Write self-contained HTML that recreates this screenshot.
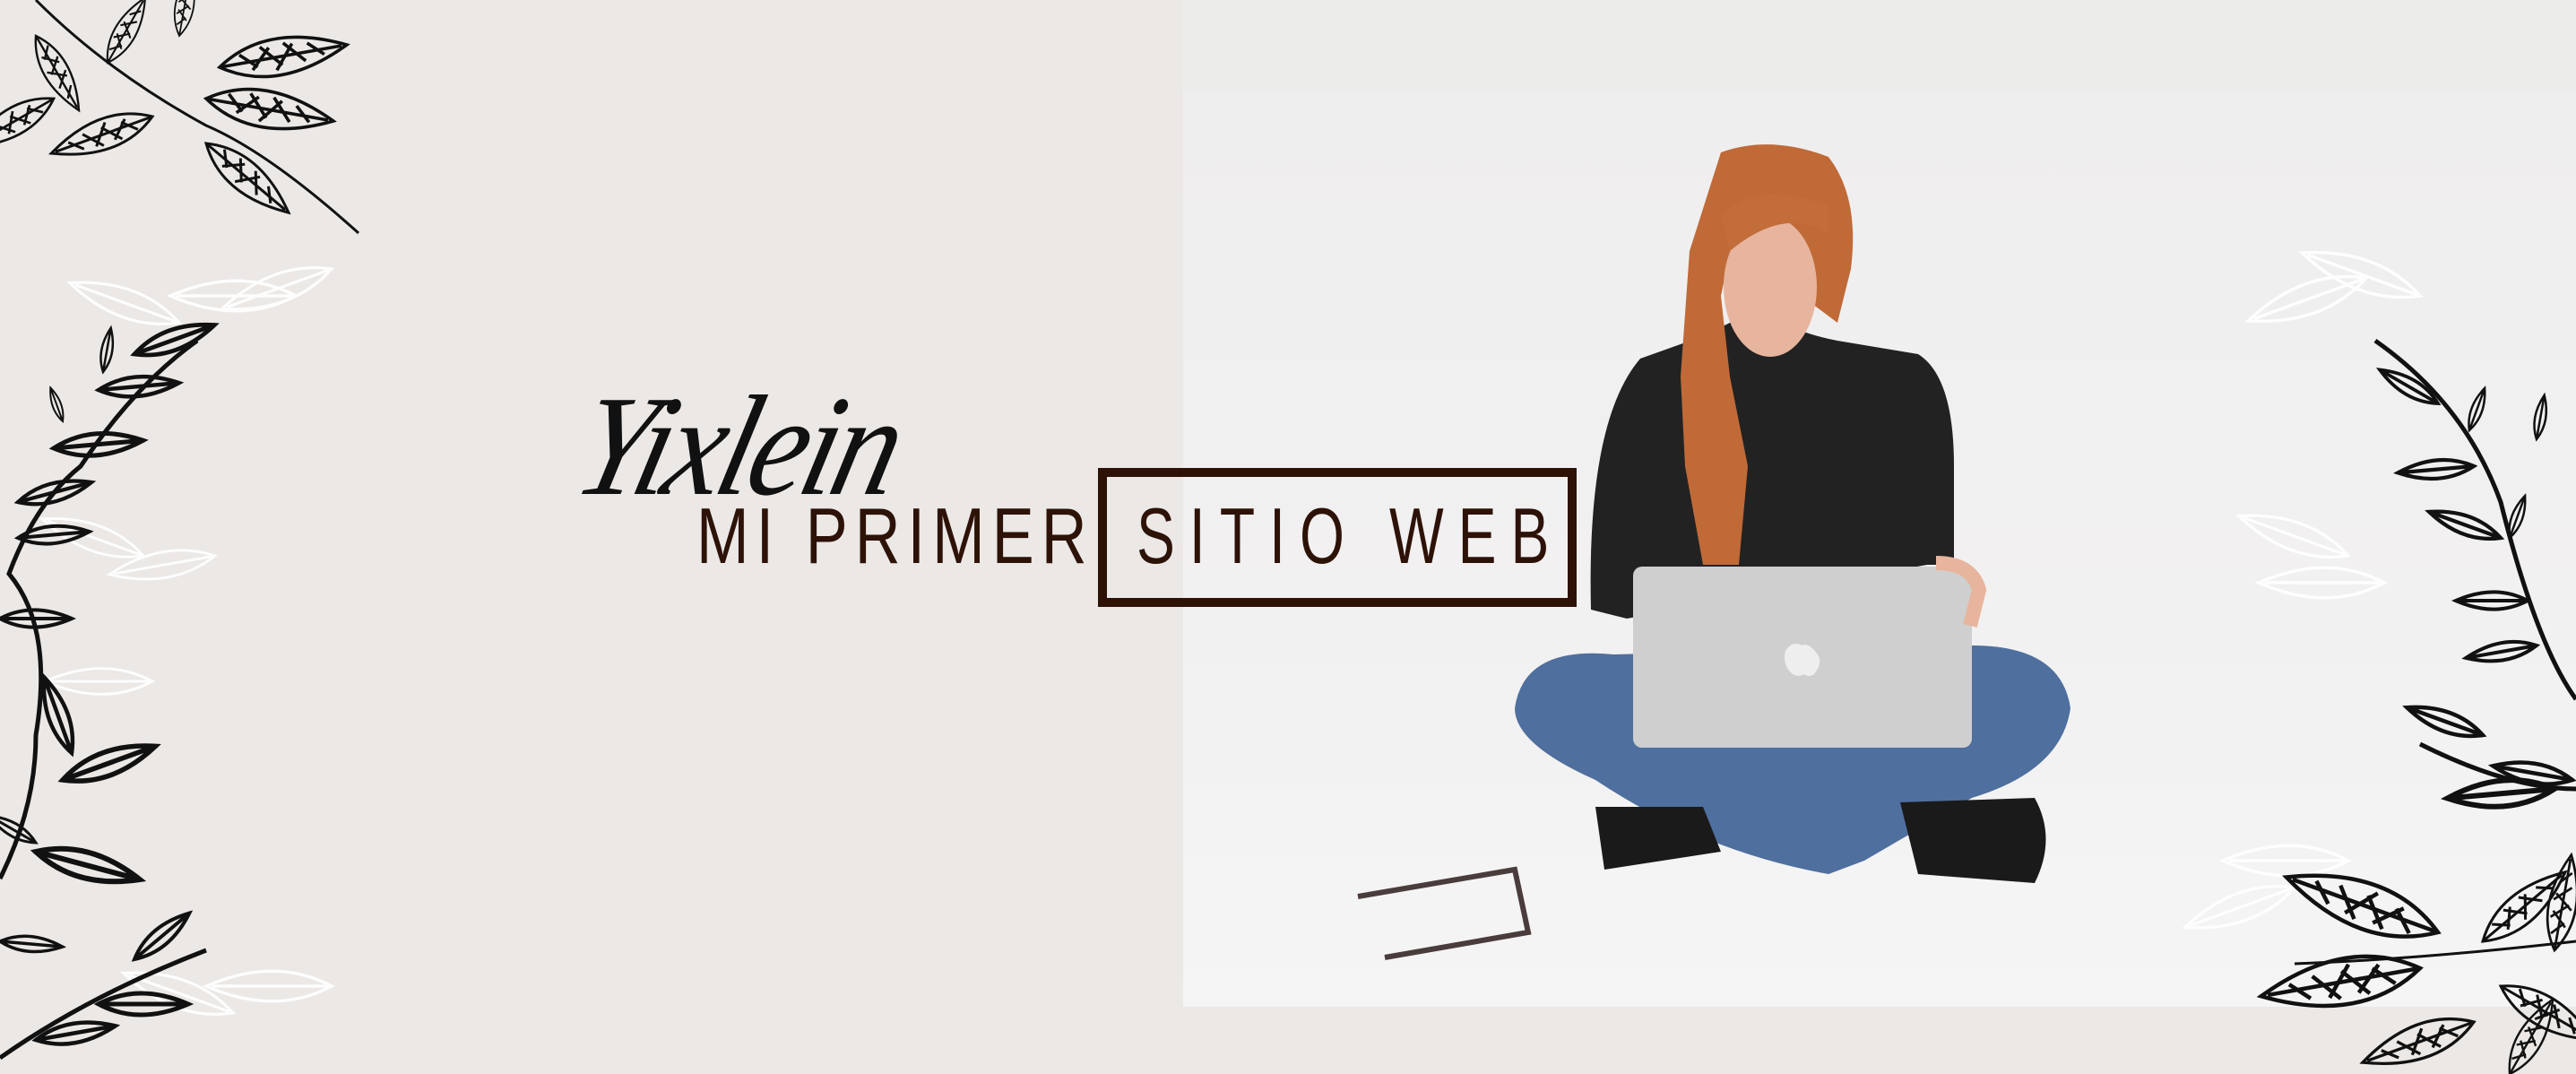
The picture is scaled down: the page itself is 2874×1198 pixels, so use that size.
<!DOCTYPE html>
<html><head><meta charset="utf-8"><style>
html,body{margin:0;padding:0;}
body{width:2874px;height:1198px;overflow:hidden;background:#ebe8e6;position:relative;font-family:"Liberation Sans",sans-serif;}
.photo{position:absolute;left:1320px;top:100px;width:1554px;height:1023px;background:linear-gradient(180deg,#efeeee 0%,#f2f1f1 60%,#f5f5f5 100%);}
.topbg{position:absolute;left:1320px;top:0;width:1554px;height:100px;background:#ececeb;}
svg{position:absolute;left:0;top:0;}
.script{position:absolute;left:672px;top:405px;font-family:"Liberation Serif",serif;font-style:italic;font-size:160px;color:#111;letter-spacing:-6px;transform:skewX(-14deg) scaleX(0.9);transform-origin:0 0;}
.t{position:absolute;top:548px;font-size:88px;color:#2d1207;letter-spacing:10px;transform-origin:0 0;white-space:nowrap;line-height:100px;}
.box{position:absolute;left:1225px;top:522px;width:514px;height:135px;border:10px solid #2e1206;}
</style></head><body>
<div class="topbg"></div>
<div class="photo"></div>
<svg width="2874" height="1198" viewBox="0 0 2874 1198">
<defs>
<path id="lf" d="M0 0 Q45 -24 100 0 Q45 24 0 0Z M0 0 L95 0"/>
<path id="fl" d="M0 0 Q50 -34 120 0 Q50 34 0 0Z M0 0 L115 0 M20 -8 L35 6 M40 -12 L58 8 M62 -12 L80 8 M84 -8 L98 5 M30 8 L48 -10 M52 12 L70 -10"/>
</defs>
<g>
<path d="M1775 680 Q1770 470 1830 400 L1900 375 L1930 360 L1990 360 Q2010 372 2050 380 L2140 395 Q2180 420 2180 520 L2180 630 L2150 630 L1815 690 Z" fill="#222"/>
<path d="M1920 170 Q1975 150 2040 175 Q2075 220 2065 300 L2050 360 L2010 330 L1990 250 L1935 260 L1920 330 L1930 420 L1950 520 L1940 630 L1900 630 L1880 520 L1875 420 L1885 280 Z" fill="#c06a38"/>
<ellipse cx="1975" cy="320" rx="52" ry="78" fill="#e7b59e"/>
<path d="M1920 240 Q1960 200 2040 230 L2040 260 Q1990 230 1930 280 Z" fill="#c26d3a"/>
<path d="M1690 790 Q1700 720 1800 730 L2200 720 Q2300 720 2310 790 Q2300 860 2200 890 L2080 960 L2040 975 Q1900 950 1780 870 Q1690 830 1690 790Z" fill="#4f6f9e"/>
<path d="M1780 900 L1900 900 L1920 950 L1790 970 Z" fill="#1a1a1a"/>
<path d="M2120 895 L2270 890 Q2295 935 2270 985 L2140 975 Z" fill="#1a1a1a"/>
<rect x="1822" y="632" width="378" height="202" rx="10" fill="#cfcfcf"/>
<path d="M2010 720 q-10 -6 -18 6 q-4 16 8 26 q8 4 12 0 q6 4 12 0 q10 -12 4 -22 q-10 -14 -18 -10z" fill="#eee"/>
<path d="M2160 628 q40 0 48 30 l-10 40" stroke="#e7b59e" stroke-width="16" fill="none"/>
<path d="M1515 1000 L1690 970 L1705 1040 L1545 1068" stroke="#4a3c3c" stroke-width="6" fill="none"/>
</g>
<g stroke="#fff" stroke-width="2.5" fill="none" opacity=".9">
<use href="#lf" transform="translate(330,330) rotate(180) scale(1.4)"/>
<use href="#lf" transform="translate(200,360) rotate(200) scale(1.3)"/>
<use href="#lf" transform="translate(370,300) rotate(160) scale(1.3)"/>
<use href="#lf" transform="translate(160,620) rotate(200) scale(1.2)"/>
<use href="#lf" transform="translate(240,620) rotate(170) scale(1.2)"/>
<use href="#lf" transform="translate(170,760) rotate(180) scale(1.2)"/>
<use href="#lf" transform="translate(370,1100) rotate(180) scale(1.4)"/>
<use href="#lf" transform="translate(260,1130) rotate(200) scale(1.3)"/>
<use href="#lf" transform="translate(2700,330) rotate(200) scale(1.4)"/>
<use href="#lf" transform="translate(2640,310) rotate(160) scale(1.4)"/>
<use href="#lf" transform="translate(2660,650) rotate(180) scale(1.4)"/>
<use href="#lf" transform="translate(2620,620) rotate(200) scale(1.3)"/>
<use href="#lf" transform="translate(2620,960) rotate(180) scale(1.4)"/>
<use href="#lf" transform="translate(2560,990) rotate(160) scale(1.3)"/>
</g>
<g stroke="#111" stroke-width="3" fill="none">
<path d="M40 0 Q120 80 230 140 Q300 170 400 260"/>
<use href="#fl" transform="translate(245,75) rotate(-10) scale(1.2)"/>
<use href="#fl" transform="translate(230,110) rotate(10) scale(1.2)"/>
<use href="#fl" transform="translate(60,110) rotate(150) scale(0.9)"/>
<use href="#fl" transform="translate(170,130) rotate(160) scale(1.0)"/>
<use href="#fl" transform="translate(230,160) rotate(40) scale(1.0)"/>
<use href="#fl" transform="translate(120,70) rotate(-60) scale(0.7)"/>
<use href="#fl" transform="translate(200,40) rotate(-80) scale(0.6)"/>
<use href="#fl" transform="translate(40,40) rotate(60) scale(0.8)"/>
</g>
<g stroke="#111" stroke-width="5" fill="none">
<path d="M0 980 Q40 900 40 820 Q60 700 10 640 Q40 560 90 520 Q150 430 220 380"/>
<path d="M0 1180 Q100 1110 230 1060"/>
<use href="#lf" transform="translate(150,395) rotate(-20) scale(0.95)"/>
<use href="#lf" transform="translate(110,435) rotate(-5) scale(0.9)"/>
<use href="#lf" transform="translate(60,500) rotate(-5) scale(1.0)"/>
<use href="#lf" transform="translate(20,560) rotate(-15) scale(0.85)"/>
<use href="#lf" transform="translate(20,600) rotate(-5) scale(0.8)"/>
<use href="#lf" transform="translate(0,690) rotate(0) scale(0.8)"/>
<use href="#lf" transform="translate(70,470) rotate(-110) scale(0.4)"/>
<use href="#lf" transform="translate(115,415) rotate(-80) scale(0.5)"/>
<use href="#lf" transform="translate(70,870) rotate(-20) scale(1.1)"/>
<use href="#lf" transform="translate(40,950) rotate(15) scale(1.2)"/>
<use href="#lf" transform="translate(80,840) rotate(-110) scale(0.9)"/>
<use href="#lf" transform="translate(40,940) rotate(-150) scale(0.6)"/>
<use href="#lf" transform="translate(0,1050) rotate(5) scale(0.7)"/>
<use href="#lf" transform="translate(150,1070) rotate(-40) scale(0.8)"/>
<use href="#lf" transform="translate(110,1120) rotate(0) scale(1.0)"/>
<use href="#lf" transform="translate(40,1160) rotate(-10) scale(0.9)"/>
</g>
<g stroke="#111" stroke-width="5" fill="none">
<path d="M2650 380 Q2750 450 2790 560 Q2830 720 2874 780"/>
<path d="M2700 830 Q2800 880 2874 880"/>
<use href="#lf" transform="translate(2720,450) rotate(-150) scale(0.75)"/>
<use href="#lf" transform="translate(2760,520) rotate(175) scale(0.85)"/>
<use href="#lf" transform="translate(2790,600) rotate(-160) scale(0.85)"/>
<use href="#lf" transform="translate(2820,670) rotate(180) scale(0.8)"/>
<use href="#lf" transform="translate(2830,720) rotate(170) scale(0.8)"/>
<use href="#lf" transform="translate(2755,480) rotate(-70) scale(0.5)"/>
<use href="#lf" transform="translate(2800,600) rotate(-70) scale(0.5)"/>
<use href="#lf" transform="translate(2830,490) rotate(-80) scale(0.5)"/>
<use href="#lf" transform="translate(2770,820) rotate(-160) scale(0.9)"/>
<use href="#lf" transform="translate(2850,880) rotate(175) scale(1.2)"/>
<use href="#lf" transform="translate(2870,870) rotate(-170) scale(0.9)"/>
</g>
<g stroke="#111" stroke-width="3" fill="none">
<path d="M2560 1075 Q2700 1070 2874 1050"/>
<use href="#fl" transform="translate(2720,1040) rotate(-160) scale(1.5)"/>
<use href="#fl" transform="translate(2700,1080) rotate(170) scale(1.5)"/>
<use href="#fl" transform="translate(2770,1050) rotate(-40) scale(1.0)"/>
<use href="#fl" transform="translate(2790,1100) rotate(30) scale(1.0)"/>
<use href="#fl" transform="translate(2760,1140) rotate(160) scale(1.1)"/>
<use href="#fl" transform="translate(2800,1198) rotate(-60) scale(0.8)"/>
<use href="#fl" transform="translate(2850,1060) rotate(-80) scale(0.9)"/>
</g>
</svg>
<div class="script">Yixlein</div>
<div class="t" style="left:777px;transform:scaleX(0.8);">MI PRIMER</div>
<div class="t" style="left:1268px;letter-spacing:22px;transform:scaleX(0.73);">SITIO WEB</div>
<div class="box"></div>
</body></html>
